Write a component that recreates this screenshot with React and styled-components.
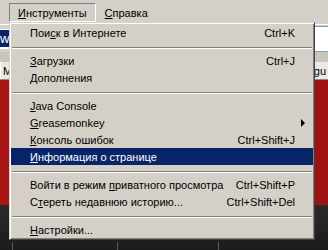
import React from 'react';
import styled, { createGlobalStyle } from 'styled-components';

const GlobalStyle = createGlobalStyle`
  html, body {
    margin: 0;
    padding: 0;
    background: #1e1e1e;
  }
  body {
    font-family: "Liberation Sans", Arial, sans-serif;
    font-size: 11px;
  }
`

const Window = styled.div`
  position: relative;
  width: 328px;
  height: 250px;
  overflow: hidden;
  display: flex;
  flex-direction: column;
  background: #1e1e1e;
`

const MenuBar = styled.div`
  height: 24px;
  flex-shrink: 0;
  display: flex;
  align-items: flex-start;
  padding: 3px 0 0 9px;
  box-sizing: border-box;
  background: #d4d0c8;
  color: #000;
`

const MenuTitle = styled.div`
  height: 19px;
  padding: 0 8px;
  display: flex;
  align-items: center;
  box-sizing: border-box;
  border: 1px solid ${props => props.$pressed ? '#808080' : 'transparent'};
  border-right-color: ${props => props.$pressed ? '#ffffff' : 'transparent'};
  border-bottom-color: ${props => props.$pressed ? '#ffffff' : 'transparent'};
`

const Key = styled.span`
  text-decoration: underline;
  text-underline-offset: 1px;
`

const NavBar = styled.div`
  height: 28px;
  flex-shrink: 0;
  display: flex;
  align-items: center;
  gap: 6px;
  background: #d4d0c8;
  border-top: 1px solid #ffffff;
  box-sizing: border-box;
`

const AddressField = styled.div`
  flex: 1;
  height: 20px;
  display: flex;
  align-items: center;
  background: #ffffff;
`

const Selected = styled.span`
  background: #0a246a;
  color: #ffffff;
  padding: 1px 0;
  font-size: 13px;
`

const SearchField = styled.div`
  width: 16px;
  height: 24px;
  background: #ffffff;
  border: 1px solid #7f9db9;
  border-right: none;
`

const TabBar = styled.div`
  height: 28px;
  flex-shrink: 0;
  display: flex;
  align-items: flex-end;
  justify-content: space-between;
  background: #c9c5bd;
  border-bottom: 1px solid #8d8a84;
  box-sizing: border-box;
`

const Tab = styled.div`
  height: 17px;
  padding: 0 2px;
  display: flex;
  align-items: center;
  background: #ece9e4;
  border-left: 1px solid #ffffff;
  color: #000;
`

const Content = styled.div`
  flex: 1;
  background: linear-gradient(90deg, #a81616 0%, #9e1212 60%, #a01111 100%);
  color: #ffffff;
  padding: 12px 0 0 13px;
  font-size: 13px;
`

const Footer = styled.div`
  height: 45px;
  flex-shrink: 0;
  display: flex;
  align-items: flex-end;
  background: linear-gradient(180deg, #2a2a2a 0%, #1c1c1c 100%);
`

const StatusCell = styled.div`
  width: ${props => props.$w}px;
  height: 8px;
  border-left: 1px solid #5a5a5a;
`

const Dropdown = styled.div`
  position: absolute;
  top: 22px;
  left: 9px;
  width: 306px;
  padding: 1px;
  box-sizing: border-box;
  background: #d4d0c8;
  border-top: 1px solid #d4d0c8;
  border-left: 1px solid #d4d0c8;
  border-right: 1px solid #404040;
  border-bottom: 1px solid #404040;
  box-shadow: inset 1px 1px #ffffff, inset -1px -1px #808080;
  color: #000;
`

const Item = styled.div`
  height: 17px;
  display: flex;
  align-items: center;
  padding-left: 19px;
  background: ${props => props.$active ? '#0a246a' : 'transparent'};
  color: ${props => props.$active ? '#ffffff' : '#000000'};
  white-space: nowrap;
`

const Label = styled.span`
  flex: 1;
`

const Shortcut = styled.span`
  text-align: right;
`

const ArrowSlot = styled.span`
  width: 18px;
  height: 17px;
  display: flex;
  align-items: center;
  padding-left: 6px;
  box-sizing: border-box;
`

const Arrow = styled.span`
  width: 0;
  height: 0;
  border-top: 4px solid transparent;
  border-bottom: 4px solid transparent;
  border-left: 4px solid #000;
`

const Separator = styled.div`
  height: 11px;
  padding: 6px 1px 0;
  box-sizing: border-box;
  &::before {
    content: '';
    display: block;
    border-top: 1px solid #808080;
    border-bottom: 1px solid #ffffff;
  }
`

const menu = [
  { label: ['Пои', 'с', 'к в Интернете'], shortcut: 'Ctrl+K' },
  'sep',
  { label: ['', 'З', 'агрузки'], shortcut: 'Ctrl+J' },
  { label: ['', 'Д', 'ополнения'] },
  'sep',
  { label: ['', 'J', 'ava Console'] },
  { label: ['', 'G', 'reasemonkey'], submenu: true },
  { label: ['', 'К', 'онсоль ошибок'], shortcut: 'Ctrl+Shift+J' },
  { label: ['', 'И', 'нформация о странице'], active: true },
  'sep',
  { label: ['Войти в режим ', 'п', 'риватного просмотра'], shortcut: 'Ctrl+Shift+P' },
  { label: ['С', 'т', 'ереть недавнюю историю...'], shortcut: 'Ctrl+Shift+Del' },
  'sep',
  { label: ['', 'Н', 'астройки...'] },
];

function App() {
  return (
    <>
      <GlobalStyle />
      <Window>
        <MenuBar>
          <MenuTitle $pressed><Key>И</Key>нструменты</MenuTitle>
          <MenuTitle><Key>С</Key>правка</MenuTitle>
        </MenuBar>
        <NavBar>
          <AddressField><Selected>www.</Selected></AddressField>
          <SearchField />
        </NavBar>
        <TabBar>
          <Tab>М</Tab>
          <Tab>Regu</Tab>
        </TabBar>
        <Content>f</Content>
        <Footer>
          <StatusCell $w={12} style={{ borderLeft: 'none' }} />
          <StatusCell $w={105} />
          <StatusCell $w={101} />
          <StatusCell $w={110} />
        </Footer>

        <Dropdown>
          {menu.map((entry, i) => entry === 'sep' ? (
            <Separator key={i} />
          ) : (
            <Item key={i} $active={entry.active}>
              <Label>{entry.label[0]}<Key>{entry.label[1]}</Key>{entry.label[2]}</Label>
              {entry.shortcut && <Shortcut>{entry.shortcut}</Shortcut>}
              <ArrowSlot>{entry.submenu && <Arrow />}</ArrowSlot>
            </Item>
          ))}
        </Dropdown>
      </Window>
    </>
  );
}

export default App;
